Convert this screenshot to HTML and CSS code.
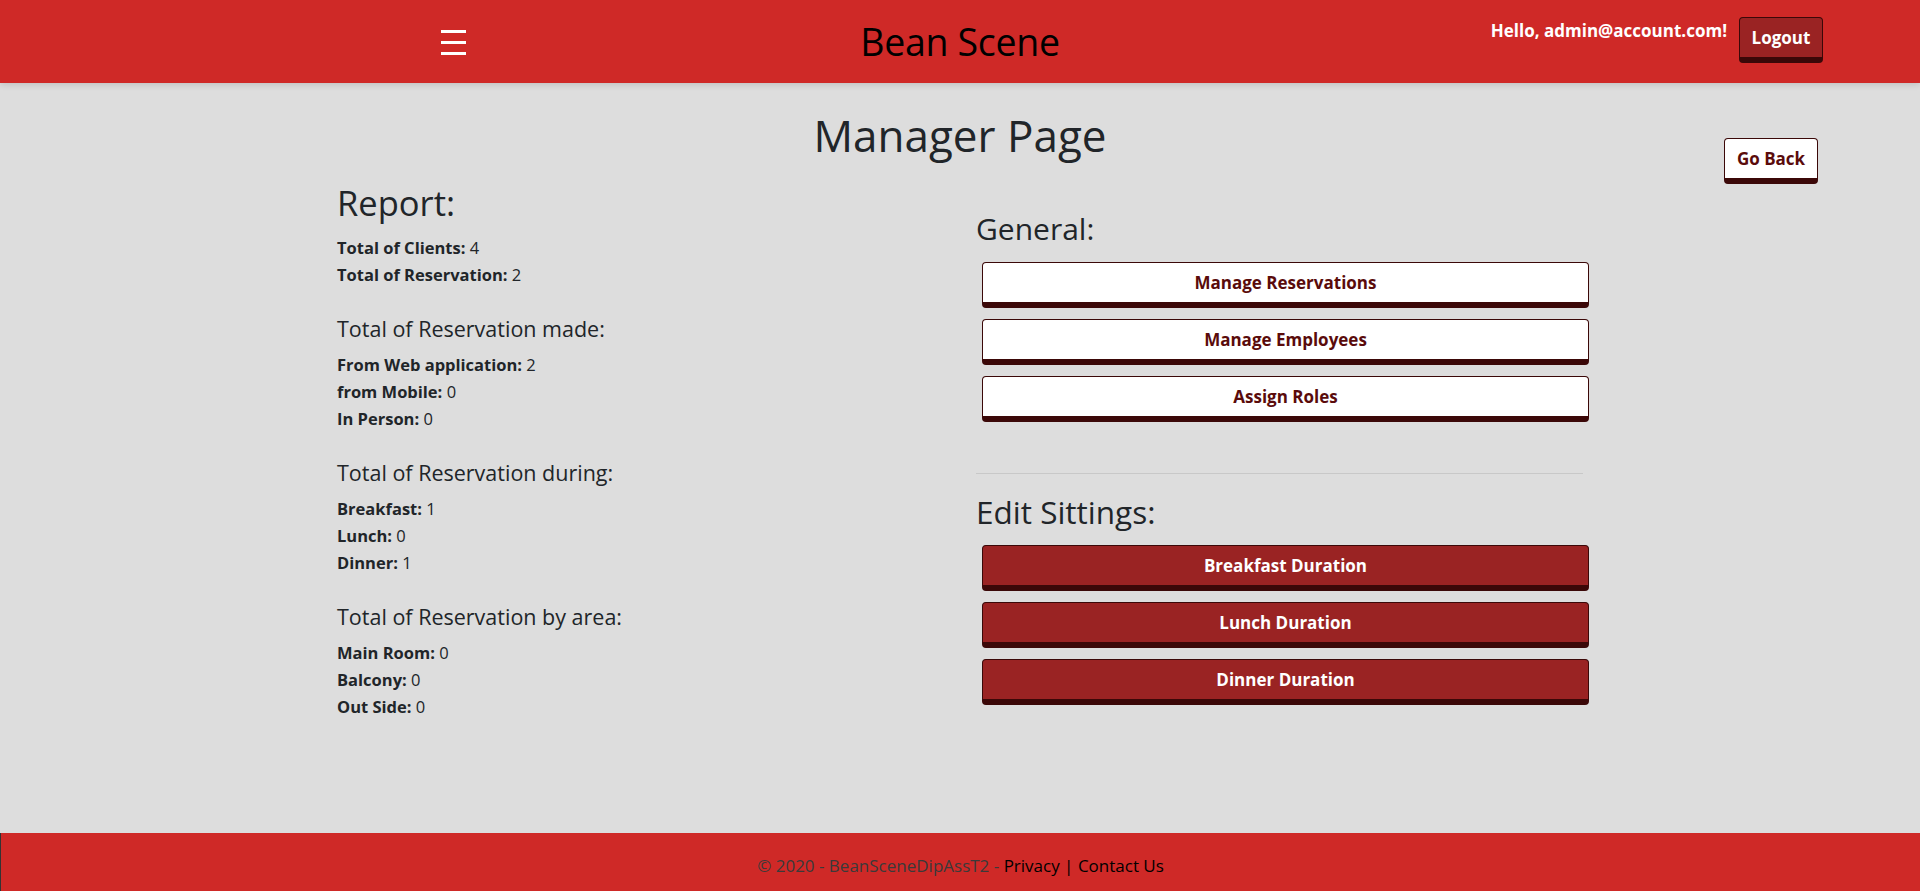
FILE: index.html
```html
<!DOCTYPE html>
<html lang="en">
<head>
<meta charset="utf-8">
<title>Manager Page - Bean Scene</title>
<link rel="stylesheet" href="styles.css">
</head>
<body>
<header class="topbar">
  <div class="burger" aria-label="menu"><span></span><span></span><span></span></div>
  <div class="brand">Bean Scene</div>
  <div class="account">
    <span class="hello">Hello, admin@account.com!</span>
    <button class="btn btn-red btn-logout">Logout</button>
  </div>
</header>
<main class="main">
  <div class="title-row">
    <div></div>
    <h1 class="page-title">Manager Page</h1>
    <div class="back-cell"><button class="btn btn-white btn-back">Go Back</button></div>
  </div>
  <div class="content">
    <section class="report">
      <h2 class="report-title">Report:</h2>
      <div class="line"><b>Total of Clients:</b> <span class="val">4</span></div>
      <div class="line"><b>Total of Reservation:</b> <span class="val">2</span></div>

      <h5 class="sub">Total of Reservation made:</h5>
      <div class="line"><b>From Web application:</b> <span class="val">2</span></div>
      <div class="line"><b>from Mobile:</b> <span class="val">0</span></div>
      <div class="line"><b>In Person:</b> <span class="val">0</span></div>

      <h5 class="sub">Total of Reservation during:</h5>
      <div class="line"><b>Breakfast:</b> <span class="val">1</span></div>
      <div class="line"><b>Lunch:</b> <span class="val">0</span></div>
      <div class="line"><b>Dinner:</b> <span class="val">1</span></div>

      <h5 class="sub">Total of Reservation by area:</h5>
      <div class="line"><b>Main Room:</b> <span class="val">0</span></div>
      <div class="line"><b>Balcony:</b> <span class="val">0</span></div>
      <div class="line"><b>Out Side:</b> <span class="val">0</span></div>
    </section>
    <section class="actions">
      <h3 class="act-title first">General:</h3>
      <div class="btn-stack">
        <button class="btn btn-white btn-block">Manage Reservations</button>
        <button class="btn btn-white btn-block">Manage Employees</button>
        <button class="btn btn-white btn-block">Assign Roles</button>
      </div>
      <hr class="divider">
      <h3 class="act-title second">Edit Sittings:</h3>
      <div class="btn-stack">
        <button class="btn btn-red btn-block">Breakfast Duration</button>
        <button class="btn btn-red btn-block">Lunch Duration</button>
        <button class="btn btn-red btn-block">Dinner Duration</button>
      </div>
    </section>
  </div>
</main>
<footer class="footer">
  <span class="copy">&copy; 2020 - BeanSceneDipAssT2 - </span><a class="flink" href="#">Privacy</a><span class="sep"> | </span><a class="flink" href="#">Contact Us</a>
</footer>
</body>
</html>
```
FILE: styles.css
```css
* { box-sizing: border-box; }
html, body { margin: 0; padding: 0; }
body {
  font-family: "Open Sans", "Noto Sans", "Liberation Sans", sans-serif;
  font-size: 16px;
  color: #212529;
  background: #dddddd;
  width: 1920px;
  height: 891px;
  overflow: hidden;
}
.topbar {
  height: 83px;
  background: #cf2927;
  display: grid;
  grid-template-columns: 1fr auto 1fr;
  align-items: start;
  position: relative;
  box-shadow: 0 2px 6px rgba(0,0,0,0.12);
}
.burger {
  margin: 30px 0 0 441px;
  width: 25px;
  display: flex;
  flex-direction: column;
  gap: 8px;
}
.burger span { display: block; height: 3px; background: #fff; }
.brand {
  font-size: 37.5px;
  line-height: 48px;
  margin-top: 18px;
  color: #000;
  letter-spacing: -0.3px;
}
.account {
  justify-self: end;
  margin-right: 97px;
  margin-top: 17px;
  display: flex;
  align-items: flex-start;
  gap: 12px;
}
.hello {
  color: #fff;
  font-weight: 700;
  font-size: 17px;
  line-height: 20px;
  margin-top: 4px;
}
.btn {
  font-family: inherit;
  font-weight: 700;
  font-size: 17px;
  border: 1px solid #3b0808;
  border-bottom-width: 6px;
  border-radius: 4px;
  cursor: pointer;
  padding: 0;
}
.btn-red { background: #9a2323; color: #fff; }
.btn-white { background: #fff; color: #5a0b0b; }
.btn-logout { width: 84px; height: 46px; font-size: 17px; }
.btn-back { width: 94px; height: 46px; font-size: 17px; }
.main { height: 750px; padding-top: 28px; }
.title-row {
  display: grid;
  grid-template-columns: 1fr auto 1fr;
  padding: 0 102px;
}
.page-title {
  margin: 0;
  font-size: 44px;
  line-height: 48px;
  font-weight: 500;
}
.back-cell { justify-self: end; padding-top: 27px; }
.content {
  width: 1246px;
  margin: 0 auto;
  display: grid;
  grid-template-columns: 1fr 607px;
}
.report-title {
  margin: 0 0 12px;
  font-size: 34.5px;
  line-height: 38px;
  font-weight: 500;
}
.line { line-height: 27px; font-size: 16.5px; }
.line b { font-weight: 700; }
.val { font-weight: 400; }
.sub {
  margin: 29px 0 10px;
  font-size: 21.5px;
  line-height: 24px;
  font-weight: 500;
}
.act-title {
  margin: 0 0 14px;
  font-size: 30px;
  line-height: 38px;
  font-weight: 500;
}
.act-title.first { margin-top: 26px; }
.act-title.second { font-size: 31.5px; }
.btn-stack { display: flex; flex-direction: column; gap: 11px; padding-left: 6px; margin-right: -6px; }
.btn-block { width: 100%; height: 46px; }
.divider {
  margin: 51px 0 19px;
  border: 0;
  border-top: 1px solid #c8c8c8;
}
.footer {
  height: 58px;
  background: #cf2927;
  border-left: 1px solid #333;
  text-align: center;
  padding-top: 21px;
  font-size: 17px;
  line-height: 24px;
  color: #3a3a3a;
}
.flink { color: #000; text-decoration: none; }
.sep { color: #000; }
```
